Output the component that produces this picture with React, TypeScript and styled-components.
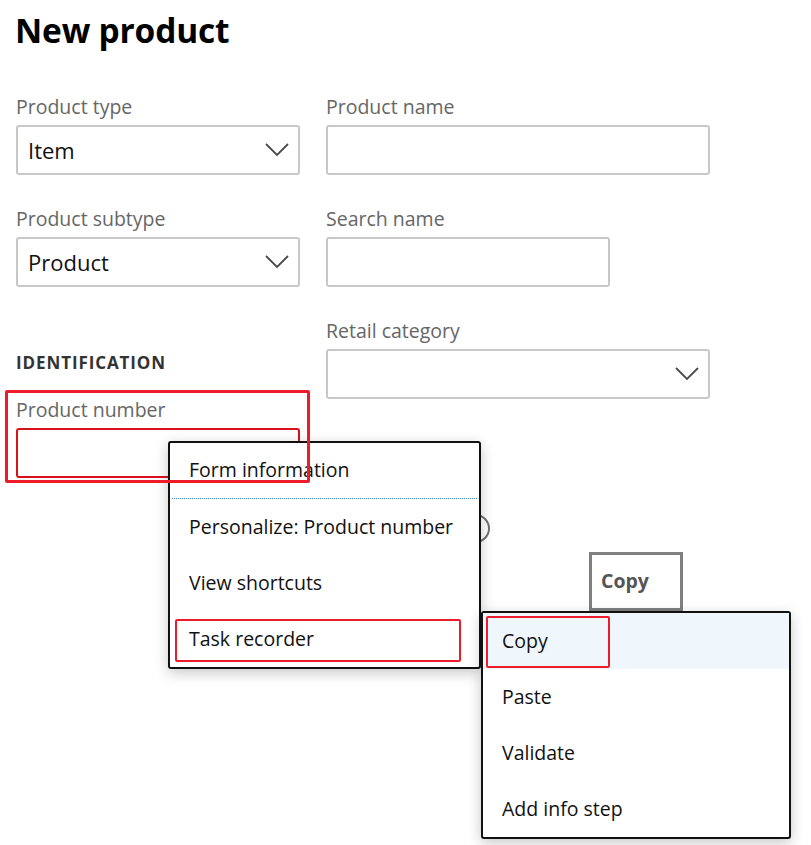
import styled, { createGlobalStyle } from 'styled-components';

const GlobalStyle = createGlobalStyle`
  body {
    margin: 0;
    background: #fff;
    font-family: 'Open Sans', 'Noto Sans', sans-serif;
  }
  * { box-sizing: border-box; }
`;

const Chevron = () => (
  <svg width="24" height="14" viewBox="0 0 24 14">
    <path d="M1 1 L12 12 L23 1" fill="none" stroke="#4a4a4a" strokeWidth="1.8" />
  </svg>
);

export default function App() {
  return (
    <Page>
      <GlobalStyle />
      <Title>New product</Title>
      <FormGrid>
        <Field>
          <Label>Product type</Label>
          <SelectBox $width={284}>
            <Value>Item</Value>
            <Chevron />
          </SelectBox>
        </Field>
        <Field>
          <Label>Product name</Label>
          <InputBox $width={384} />
        </Field>
        <Field>
          <Label>Product subtype</Label>
          <SelectBox $width={284}>
            <Value>Product</Value>
            <Chevron />
          </SelectBox>
        </Field>
        <Field>
          <Label>Search name</Label>
          <InputBox $width={284} />
        </Field>
        <Column>
          <SectionTitle>IDENTIFICATION</SectionTitle>
          <Field>
            <Label>Product number</Label>
            <InputBox $width={284} $error />
          </Field>
        </Column>
        <Field>
          <Label>Retail category</Label>
          <SelectBox $width={384}>
            <Value />
            <Chevron />
          </SelectBox>
        </Field>
      </FormGrid>

      <InfoCircle />

      <Menu $left={168} $top={441} $width={313}>
        <MenuItem $separator>Form information</MenuItem>
        <MenuItem>Personalize: Product number</MenuItem>
        <MenuItem>View shortcuts</MenuItem>
        <MenuItem>Task recorder</MenuItem>
      </Menu>

      <Tooltip>Copy</Tooltip>

      <Menu $left={481} $top={611} $width={310}>
        <MenuItem $active>Copy</MenuItem>
        <MenuItem>Paste</MenuItem>
        <MenuItem>Validate</MenuItem>
        <MenuItem>Add info step</MenuItem>
      </Menu>

      <Highlight $left={5} $top={390} $width={305} $height={93} $thick />
      <Highlight $left={175} $top={619} $width={286} $height={43} />
      <Highlight $left={486} $top={616} $width={124} $height={52} />
    </Page>
  );
}

const Page = styled.div`
  position: relative;
  width: 811px;
  height: 845px;
  overflow: hidden;
  padding: 8px 16px 0;
`;

const Title = styled.h1`
  margin: 0 0 0 -1px;
  font-size: 33.5px;
  line-height: 44px;
  font-weight: 700;
  color: #000;
  letter-spacing: -0.2px;
`;

const FormGrid = styled.div`
  display: grid;
  grid-template-columns: 284px 384px;
  column-gap: 26px;
  row-gap: 34px;
  align-items: start;
  margin-top: 45px;
`;

const Column = styled.div`
  display: flex;
  flex-direction: column;
`;

const Field = styled.div`
  display: flex;
  flex-direction: column;
`;

const Label = styled.div`
  height: 28px;
  font-size: 19.5px;
  line-height: 20px;
  color: #666;
`;

const SectionTitle = styled.div`
  margin-top: 30px;
  height: 49px;
  font-size: 17px;
  font-weight: 700;
  color: #333;
  line-height: 24px;
  letter-spacing: 0.9px;
`;

const InputBox = styled.div<{ $width: number; $error?: boolean }>`
  width: ${(p) => p.$width}px;
  height: 50px;
  border: 2px solid ${(p) => (p.$error ? '#d9111c' : '#c8c8c8')};
  border-radius: 3px;
  background: #fff;
`;

const SelectBox = styled(InputBox)`
  display: flex;
  align-items: center;
  justify-content: space-between;
  padding: 0 9px 0 10px;
`;

const Value = styled.span`
  font-size: 22px;
  color: #111;
`;

const InfoCircle = styled.div`
  position: absolute;
  left: 461px;
  top: 514px;
  width: 29px;
  height: 29px;
  border: 2px solid #707070;
  border-radius: 50%;
`;

const Menu = styled.div<{ $left: number; $top: number; $width: number }>`
  position: absolute;
  left: ${(p) => p.$left}px;
  top: ${(p) => p.$top}px;
  width: ${(p) => p.$width}px;
  background: #fff;
  border: 2px solid #111;
  border-radius: 3px;
  box-shadow: 0 4px 14px rgba(0, 0, 0, 0.22);
  display: flex;
  flex-direction: column;
`;

const MenuItem = styled.div<{ $separator?: boolean; $active?: boolean }>`
  height: 56px;
  display: flex;
  align-items: center;
  padding-bottom: 2px;
  font-size: 19.5px;
  color: #111;
  background: ${(p) => (p.$active ? '#eff6fc' : 'transparent')};
  border-bottom: ${(p) => (p.$separator ? '1.5px dotted #3a8bd0' : 'none')};
  margin: ${(p) => (p.$separator ? '0 2px' : '0')};
  padding-left: ${(p) => (p.$separator ? '17px' : '19px')};
`;

const Tooltip = styled.div`
  position: absolute;
  left: 589px;
  top: 552px;
  width: 94px;
  height: 59px;
  border: 3px solid #808080;
  background: #fff;
  padding: 0 0 2px 9px;
  display: flex;
  align-items: center;
  font-size: 19.5px;
  font-weight: 700;
  color: #555;
`;

const Highlight = styled.div<{
  $left: number;
  $top: number;
  $width: number;
  $height: number;
  $thick?: boolean;
}>`
  position: absolute;
  left: ${(p) => p.$left}px;
  top: ${(p) => p.$top}px;
  width: ${(p) => p.$width}px;
  height: ${(p) => p.$height}px;
  border: ${(p) => (p.$thick ? 3 : 2.5)}px solid #ec1c2a;
  border-radius: 2px;
  pointer-events: none;
`;
